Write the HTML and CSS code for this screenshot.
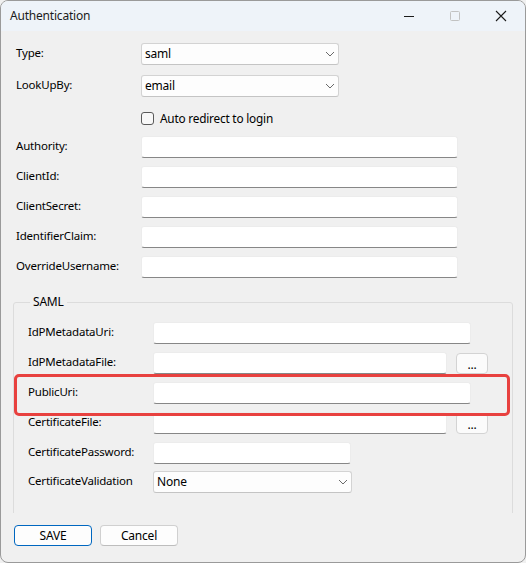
FILE: index.html
```html
<!DOCTYPE html>
<html>
<head>
<meta charset="utf-8">
<link rel="stylesheet" href="styles.css">
</head>
<body>
<div class="window">
  <div class="titlebar">
    <span class="title">Authentication</span>
    <div class="controls">
      <span class="ctl"><svg width="12" height="12" viewBox="0 0 12 12"><path d="M1 6.5h10" stroke="#1b1b1b" stroke-width="1"/></svg></span>
      <span class="ctl"><svg width="12" height="12" viewBox="0 0 12 12"><rect x="1.5" y="1.5" width="9" height="9" rx="1" fill="none" stroke="#c2c2c2" stroke-width="1"/></svg></span>
      <span class="ctl"><svg width="12" height="12" viewBox="0 0 12 12"><path d="M1 1L11 11M11 1L1 11" stroke="#1b1b1b" stroke-width="1.1"/></svg></span>
    </div>
  </div>
  <div class="content">
    <div class="row r-first">
      <label class="lbl">Type:</label>
      <div class="combo w198"><span>saml</span><svg class="chev" width="10" height="6" viewBox="0 0 10 6"><path d="M1 1l4 4 4-4" fill="none" stroke="#6a6a6a" stroke-width="1"/></svg></div>
    </div>
    <div class="row r-10">
      <label class="lbl">LookUpBy:</label>
      <div class="combo w198"><span>email</span><svg class="chev" width="10" height="6" viewBox="0 0 10 6"><path d="M1 1l4 4 4-4" fill="none" stroke="#6a6a6a" stroke-width="1"/></svg></div>
    </div>
    <div class="row r-10">
      <span class="lbl"></span>
      <div class="check"><span class="box"></span><span>Auto redirect to login</span></div>
    </div>
    <div class="row r-7">
      <label class="lbl">Authority:</label>
      <div class="tb w317"></div>
    </div>
    <div class="row r-8">
      <label class="lbl">ClientId:</label>
      <div class="tb w317"></div>
    </div>
    <div class="row r-8">
      <label class="lbl">ClientSecret:</label>
      <div class="tb w317"></div>
    </div>
    <div class="row r-8">
      <label class="lbl">IdentifierClaim:</label>
      <div class="tb w317"></div>
    </div>
    <div class="row r-8">
      <label class="lbl">OverrideUsername:</label>
      <div class="tb w317"></div>
    </div>

    <div class="group">
      <div class="group-title">SAML</div>
      <div class="row g-first">
        <label class="lbl">IdPMetadataUri:</label>
        <div class="tb w318"></div>
      </div>
      <div class="row r-8">
        <label class="lbl">IdPMetadataFile:</label>
        <div class="tb w294"></div>
        <div class="dots">...</div>
      </div>
      <div class="row r-8 highlighted">
        <label class="lbl">PublicUri:</label>
        <div class="tb w318"></div>
      </div>
      <div class="row r-8">
        <label class="lbl">CertificateFile:</label>
        <div class="tb w294"></div>
        <div class="dots">...</div>
      </div>
      <div class="row r-8">
        <label class="lbl">CertificatePassword:</label>
        <div class="tb w198"></div>
      </div>
      <div class="row r-7">
        <label class="lbl">CertificateValidation</label>
        <div class="combo w199"><span>None</span><svg class="chev" width="10" height="6" viewBox="0 0 10 6"><path d="M1 1l4 4 4-4" fill="none" stroke="#6a6a6a" stroke-width="1"/></svg></div>
      </div>
    </div>
  </div>
  <div class="footer">
    <button class="btn primary">SAVE</button>
    <button class="btn">Cancel</button>
  </div>
</div>
</body>
</html>
```
FILE: styles.css
```css
* { box-sizing: border-box; }
html, body { margin: 0; padding: 0; background: #f0f0f0; }
body {
  font-family: "Segoe UI", "Noto Sans", sans-serif;
  font-size: 11.5px;
  letter-spacing: -0.2px;
  color: #000;
}
.window {
  width: 526px;
  height: 563px;
  border: 1px solid #9a9a9a;
  border-radius: 8px;
  overflow: hidden;
  background: #f0f0f0;
  display: flex;
  flex-direction: column;
}
.titlebar {
  height: 30px;
  flex: none;
  background: #eef3f9;
  display: flex;
  align-items: center;
  padding-left: 9px;
}
.title { color: #1b1b1b; font-size: 12px; padding-bottom: 1px; }
.controls { margin-left: auto; display: flex; align-items: center; }
.ctl {
  width: 46px;
  height: 30px;
  display: flex;
  align-items: center;
  justify-content: center;
}
.ctl:last-child { margin-right: 1px; }
.content {
  height: 482px;
  flex: none;
  overflow: hidden;
  padding: 12px 11px 0 12px;
}
.row {
  display: flex;
  align-items: center;
  height: 22px;
  padding-left: 3px;
}
.r-first { margin-top: 0; }
.r-10 { margin-top: 10px; }
.r-7 { margin-top: 7px; }
.r-8 { margin-top: 8px; }
.lbl {
  width: 125px;
  flex: none;
  padding-bottom: 4px;
  white-space: nowrap;
}
.combo {
  height: 22px;
  background: #fdfdfd;
  border: 1px solid #d3d3d3;
  border-bottom-color: #c4c4c4;
  border-radius: 3px;
  display: flex;
  align-items: center;
  padding-left: 3px;
  font-size: 12px;
  color: #000;
}
.combo span { padding-bottom: 1px; }
.chev { margin-left: auto; margin-right: 3px; }
.tb {
  height: 22px;
  background: #fff;
  border: 1px solid #ececec;
  border-bottom: 1px solid #878787;
  border-radius: 3px;
}
.w198 { width: 198px; }
.w199 { width: 199px; }
.w317 { width: 317px; }
.w318 { width: 318px; }
.w294 { width: 294px; }
.check { display: flex; align-items: center; font-size: 11.8px; color: #000; }
.check .box {
  width: 13px;
  height: 13px;
  border: 1px solid #5a5a5a;
  border-radius: 3px;
  background: #f8f8f8;
  margin-right: 6px;
}
.group {
  margin-top: 24px;
  border: 1px solid #dcdcdc;
  border-radius: 3px;
  padding: 0 0 40px 11px;
  width: 500px;
}
.group-title {
  width: fit-content;
  height: 16px;
  line-height: 16px;
  margin: -9px 0 0 5px;
  padding: 0 3px;
  background: #f0f0f0;
  font-size: 12px;
}
.g-first { margin-top: 12px; }
.dots {
  width: 32px;
  height: 21px;
  margin-left: 9px;
  background: #fbfbfb;
  border: 1px solid #d3d3d3;
  border-radius: 4px;
  display: flex;
  align-items: center;
  justify-content: center;
  padding-top: 3px;
  font-size: 12px;
  color: #000;
}
.highlighted { position: relative; }
.highlighted::after {
  content: "";
  position: absolute;
  left: -11px;
  top: -8px;
  width: 490px;
  height: 36px;
  border: 3px solid #e8413f;
  border-radius: 5px;
  pointer-events: none;
}
.footer {
  flex: 1;
  padding: 12px 0 0 13px;
  display: flex;
  align-items: flex-start;
  gap: 8px;
}
.btn {
  width: 78px;
  height: 21px;
  font-family: inherit;
  font-size: 12px;
  letter-spacing: -0.2px;
  color: #000;
  background: #fdfdfd;
  border: 1px solid #d0d0d0;
  border-bottom-color: #bdbdbd;
  border-radius: 4px;
  padding: 0 0 1px;
}
.btn.primary { border: 1px solid #0067c0; }
```
